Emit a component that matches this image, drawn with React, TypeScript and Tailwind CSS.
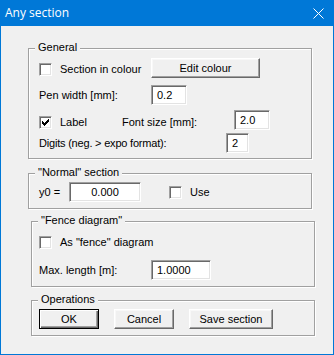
import React from "react";

const sunken =
  "bg-white border border-t-[#a0a0a0] border-l-[#a0a0a0] border-b-white border-r-white shadow-[inset_1px_1px_0_#696969,inset_-1px_-1px_0_#e3e3e3]";
const raised =
  "bg-[#f0f0f0] border border-t-white border-l-white border-b-[#696969] border-r-[#696969] shadow-[inset_-1px_-1px_0_#a0a0a0,inset_1px_1px_0_#f8f8f8]";

function Check({ checked }: { checked?: boolean }) {
  return (
    <div className={`w-[13px] h-[13px] shrink-0 relative ${sunken}`}>
      {checked && (
        <svg width="7" height="7" viewBox="0 0 7 7" className="absolute left-[2px] top-[2px]" shapeRendering="crispEdges">
          <rect x="0" y="2" width="1" height="3" fill="#000" />
          <rect x="1" y="3" width="1" height="3" fill="#000" />
          <rect x="2" y="4" width="1" height="3" fill="#000" />
          <rect x="3" y="3" width="1" height="3" fill="#000" />
          <rect x="4" y="2" width="1" height="3" fill="#000" />
          <rect x="5" y="1" width="1" height="3" fill="#000" />
          <rect x="6" y="0" width="1" height="3" fill="#000" />
        </svg>
      )}
    </div>
  );
}

function Input({ value, w, center }: { value: string; w: string; center?: boolean }) {
  return (
    <div className={`${w} h-[20px] shrink-0 flex items-center ${center ? "justify-center" : "pl-[5px]"} ${sunken}`}>
      <span className="leading-[13px]">{value}</span>
    </div>
  );
}

function Button({ label, w, def }: { label: string; w: string; def?: boolean }) {
  if (def) {
    return (
      <div className={`${w} h-[20px] shrink-0 flex items-center justify-center bg-[#f0f0f0] border border-[#000] shadow-[inset_1px_1px_0_white,inset_-1px_-1px_0_#696969,inset_-2px_-2px_0_#a0a0a0]`}>
        <span className="leading-[13px]">{label}</span>
      </div>
    );
  }
  return (
    <div className={`${w} h-[20px] shrink-0 flex items-center justify-center ${raised}`}>
      <span className="leading-[13px]">{label}</span>
    </div>
  );
}

function Group({
  title,
  className,
  children,
}: {
  title: string;
  className: string;
  children: React.ReactNode;
}) {
  return (
    <div
      className={`relative w-[284px] shrink-0 border border-[#a0a0a0] shadow-[inset_1px_1px_0_white,1px_1px_0_white] ${className}`}
    >
      <div className="absolute top-[-8px] left-[6px] px-[3px] bg-[#f0f0f0] leading-[13px]">{title}</div>
      {children}
    </div>
  );
}

export default function App() {
  return (
    <div className="w-[334px] h-[355px] flex flex-col bg-[#f0f0f0] border-x border-b border-[#0078d7] font-['Liberation_Sans',Arial,sans-serif] text-[11px] text-black">
      <div className="h-[26px] shrink-0 bg-[#0078d7] flex items-center justify-between pl-[4px] pr-[9px]">
        <span className="text-white text-[12px] font-['Open_Sans',sans-serif] leading-[16px]">Any section</span>
        <svg width="11" height="11" viewBox="0 0 11 11">
          <path d="M0.5 0.5 L10.5 10.5 M10.5 0.5 L0.5 10.5" stroke="white" strokeWidth="1" />
        </svg>
      </div>

      <Group title="General" className="ml-[27px] mt-[22px] h-[111px]">
        <div className="flex items-start mt-[9px] h-[20px]">
          <div className="w-[122px] pl-[10px] h-[13px] mt-[5px] flex items-center">
            <Check />
            <span className="ml-[8px] leading-[13px]">Section in colour</span>
          </div>
          <Button label="Edit colour" w="w-[109px]" />
        </div>
        <div className="flex items-center mt-[7px] h-[20px]">
          <span className="w-[122px] pl-[10px] leading-[13px]">Pen width [mm]:</span>
          <Input value="0.2" w="w-[36px]" />
        </div>
        <div className="flex items-start mt-[5px] h-[20px]">
          <div className="flex items-center h-[13px] mt-[6px]">
            <div className="w-[93px] pl-[10px] flex items-center">
              <Check checked />
              <span className="ml-[8px] leading-[13px]">Label</span>
            </div>
            <span className="w-[112px] leading-[13px]">Font size [mm]:</span>
          </div>
          <Input value="2.0" w="w-[36px]" />
        </div>
        <div className="flex items-center mt-[3px] h-[20px]">
          <span className="w-[197px] pl-[10px] leading-[13px] tracking-[-0.2px]">Digits (neg. &gt; expo format):</span>
          <Input value="2" w="w-[23px]" />
        </div>
      </Group>

      <Group title={'"Normal" section'} className="ml-[27px] mt-[14px] h-[36px]">
        <div className="flex items-center mt-[8px] h-[20px]">
          <span className="w-[40px] pl-[10px] leading-[13px]">y0 =</span>
          <Input value="0.000" w="w-[72px]" center />
          <div className="ml-[28px] flex items-center">
            <Check />
            <span className="ml-[8px] leading-[13px]">Use</span>
          </div>
        </div>
      </Group>

      <Group title={'"Fence diagram"'} className="ml-[30px] mt-[12px] h-[66px]">
        <div className="flex items-center mt-[14px] h-[13px] pl-[7px]">
          <Check />
          <span className="ml-[8px] leading-[13px]">As "fence" diagram</span>
        </div>
        <div className="flex items-center mt-[11px] h-[20px]">
          <span className="w-[119px] pl-[7px] leading-[13px]">Max. length [m]:</span>
          <Input value="1.0000" w="w-[60px]" />
        </div>
      </Group>

      <Group title="Operations" className="ml-[30px] mt-[13px] h-[36px]">
        <div className="flex items-center mt-[8px] h-[20px] pl-[7px]">
          <Button label="OK" w="w-[60px]" def />
          <div className="ml-[15px]">
            <Button label="Cancel" w="w-[60px]" />
          </div>
          <div className="ml-[15px]">
            <Button label="Save section" w="w-[84px]" />
          </div>
        </div>
      </Group>
    </div>
  );
}
